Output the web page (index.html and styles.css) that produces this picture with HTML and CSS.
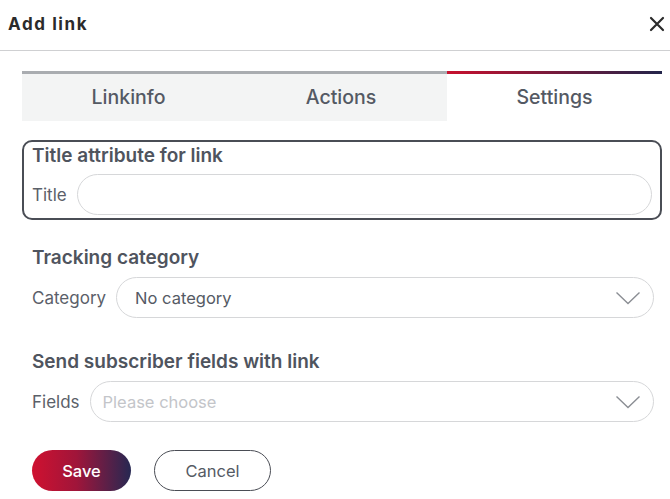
FILE: index.html
```html
<!DOCTYPE html>
<html lang="en">
<head>
<meta charset="utf-8">
<title>Add link</title>
<link rel="stylesheet" href="styles.css">
</head>
<body>
<div class="dialog">
  <header class="dialog-header">
    <h1 class="dialog-title">Add link</h1>
    <button class="close-btn" aria-label="Close">
      <svg width="16" height="16" viewBox="0 0 16 16"><path d="M2 2 L14 14 M14 2 L2 14" stroke="#2b2b2b" stroke-width="2.2" stroke-linecap="round" fill="none"/></svg>
    </button>
  </header>
  <div class="dialog-body">
    <nav class="tabs">
      <div class="tab">Linkinfo</div>
      <div class="tab">Actions</div>
      <div class="tab tab-active">Settings</div>
    </nav>

    <section class="group group-focused">
      <h2 class="group-title">Title attribute for link</h2>
      <div class="field-row">
        <label class="field-label">Title</label>
        <div class="input"></div>
      </div>
    </section>

    <section class="group group-second">
      <h2 class="group-title">Tracking category</h2>
      <div class="field-row">
        <label class="field-label">Category</label>
        <div class="input select">
          <span class="select-value">No category</span>
          <svg class="chevron" width="26" height="14" viewBox="0 0 26 14"><path d="M1.5 1.5 L13 12.5 L24.5 1.5" stroke="#8b8e94" stroke-width="1.4" fill="none"/></svg>
        </div>
      </div>
    </section>

    <section class="group group-third">
      <h2 class="group-title">Send subscriber fields with link</h2>
      <div class="field-row">
        <label class="field-label">Fields</label>
        <div class="input select">
          <span class="select-placeholder">Please choose</span>
          <svg class="chevron" width="26" height="14" viewBox="0 0 26 14"><path d="M1.5 1.5 L13 12.5 L24.5 1.5" stroke="#8b8e94" stroke-width="1.4" fill="none"/></svg>
        </div>
      </div>
    </section>

    <div class="actions">
      <button class="btn btn-primary">Save</button>
      <button class="btn btn-secondary">Cancel</button>
    </div>
  </div>
</div>
</body>
</html>
```

FILE: styles.css
```css
* { box-sizing: border-box; }
html, body { margin: 0; padding: 0; background: #ffffff; }
body {
  font-family: Inter, Roboto, "Liberation Sans", Arial, sans-serif;
  color: #555a64;
  width: 670px;
  height: 499px;
  overflow: hidden;
}
.dialog-header {
  height: 51px;
  display: flex;
  align-items: center;
  justify-content: space-between;
  padding: 0 5px 2px 8px;
  border-bottom: 1px solid #cfd0d2;
}
.dialog-title {
  margin: 0;
  font-family: Inter, "Liberation Sans", sans-serif;
  font-size: 17px;
  font-weight: 700;
  letter-spacing: 1.6px;
  color: #2b2b2b;
}
.close-btn {
  border: 0;
  background: transparent;
  padding: 0;
  width: 16px;
  height: 16px;
  display: flex;
}
.dialog-body {
  padding: 20px 8px 0 22px;
}
.tabs {
  display: grid;
  grid-template-columns: 213px 212px 1fr;
  height: 50px;
}
.tab {
  display: flex;
  align-items: center;
  justify-content: center;
  background: #f3f4f4;
  border-top: 3px solid #a9acb0;
  font-size: 19.5px;
  font-weight: 500;
  color: #545963;
  padding-bottom: 1px;
}
.tab-active {
  background: #ffffff;
  border-top: 0;
  position: relative;
  padding-top: 3px;
}
.tab-active::before {
  content: "";
  position: absolute;
  left: 0; right: 0; top: 0;
  height: 3px;
  background: linear-gradient(90deg, #c8102e, #22244a);
}
.group {
  padding: 0 8px 0 10px;
}
.group-title {
  margin: 0;
  font-size: 19px;
  font-weight: 600;
  color: #4f545e;
  line-height: 22px;
}
.group-focused {
  margin-top: 19px;
  border: 2px solid #4a4d55;
  border-radius: 10px;
  height: 80px;
  padding: 3px 8px 0 8px;
}
.group-second { margin-top: 27px; }
.group-third { margin-top: 33px; }
.field-row {
  display: flex;
  align-items: center;
  gap: 10px;
  margin-top: 8px;
}
.field-label {
  font-size: 17px;
  color: #5b6069;
  white-space: nowrap;
}
.input {
  flex: 1;
  height: 41px;
  border: 1px solid #d6d7d9;
  border-radius: 21px;
  background: #fff;
}
.group-focused .field-row { margin-top: 7px; }
.select {
  display: flex;
  align-items: center;
  justify-content: space-between;
  padding: 0 12px 0 18px;
  font-size: 16.5px;
}
.select-value { color: #555a64; }
.select-placeholder { color: #c3c5c9; margin-left: -6px; }
.chevron { flex: none; }
.actions {
  display: flex;
  gap: 23px;
  margin-top: 28px;
  padding-left: 10px;
}
.btn {
  height: 41px;
  border-radius: 21px;
  font-family: Inter, Roboto, "Liberation Sans", sans-serif;
  font-size: 16.5px;
  cursor: pointer;
}
.btn-primary {
  width: 99px;
  border: 0;
  color: #ffffff;
  font-weight: 500;
  background: linear-gradient(90deg, #cf1130 0%, #a0153a 45%, #262852 100%);
}
.btn-secondary {
  width: 117px;
  border: 1.5px solid #4a4d55;
  background: #fff;
  color: #555a64;
}
```
